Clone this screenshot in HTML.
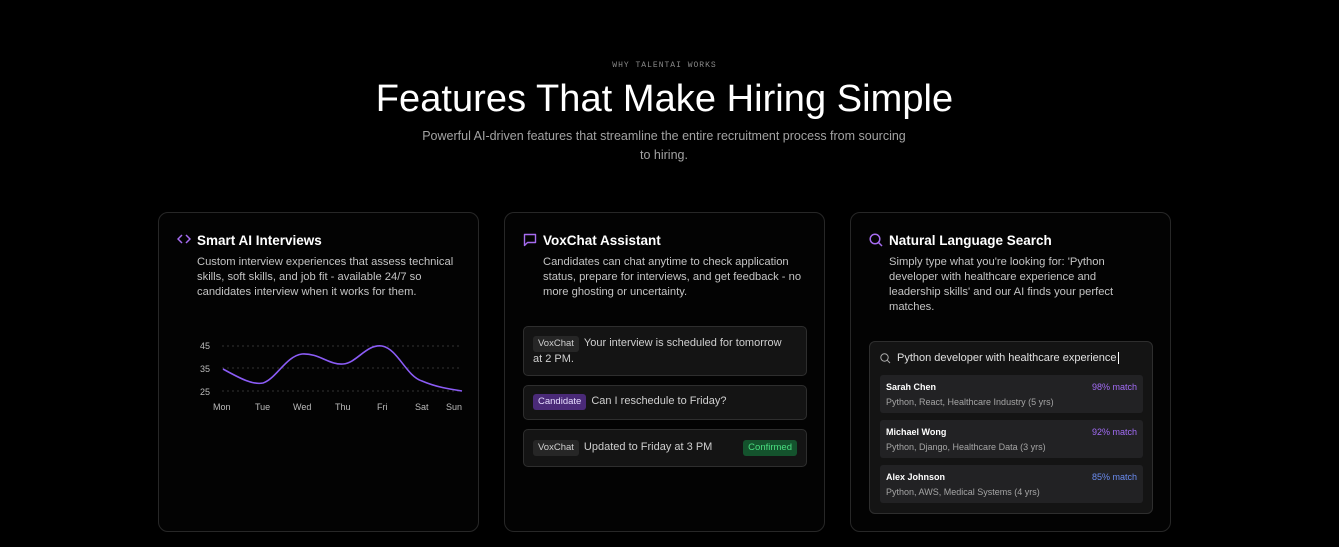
<!DOCTYPE html>
<html><head><style>
*{margin:0;padding:0;box-sizing:border-box}
body{width:1339px;height:547px;background:#000;font-family:"Liberation Sans",sans-serif;color:#fff;position:relative;overflow:hidden}
.ab{position:absolute}
.eyebrow{left:-5px;width:1339px;top:61px;text-align:center;font-family:"Liberation Mono",monospace;font-size:8px;letter-spacing:1px;color:#8a8a8a}
h1{position:absolute;left:-5px;width:1339px;top:78px;text-align:center;font-size:38px;font-weight:400;letter-spacing:0.05px}
.sub{left:364px;width:600px;top:127px;text-align:center;font-size:12.5px;line-height:19px;color:#a3a3a3}
.card{position:absolute;top:212px;width:321px;height:320px;border:1px solid #272727;border-radius:10px;background:#030303}
.title{position:absolute;left:38px;top:20px;font-size:13.5px;font-weight:bold}
.icon{position:absolute;left:18px;top:20px}
.desc{position:absolute;left:38px;top:42px;width:266px;font-size:11.2px;line-height:15px;color:#c4c4c4}
.msg{position:absolute;left:18px;width:284px;border:1px solid #2e2e2e;border-radius:5px;background:#141414;font-size:11px;color:#cfcfcf;padding:9px 9px;line-height:15px}
.tag{display:inline-block;font-size:9.5px;padding:1px 5px;border-radius:3px;background:#262626;color:#d0d0d0;margin-right:5px;line-height:14px}
.res{position:absolute;left:10px;width:263px;height:38px;background:#222224;border-radius:3px;padding:6px 6px}
.res b{font-size:9px;color:#fff;display:block;line-height:12px}
.res span{font-size:9px;color:#a5a5a5;display:block;margin-top:4px}
.res i{position:absolute;right:6px;top:7px;font-style:normal;font-size:9px;color:#a26cf5}
</style></head><body>
<div class="ab eyebrow">WHY TALENTAI WORKS</div>
<h1>Features That Make Hiring Simple</h1>
<div class="ab sub">Powerful AI-driven features that streamline the entire recruitment process from sourcing<br>to hiring.</div>

<div class="card" style="left:158px">
<svg class="icon" width="14" height="12" viewBox="0 0 14 12"><path d="M5 2L1 6l4 4M9 2l4 4-4 4" stroke="#a66cf0" stroke-width="1.5" fill="none"/></svg>
<div class="title">Smart AI Interviews</div>
<div class="desc">Custom interview experiences that assess technical skills, soft skills, and job fit - available 24/7 so candidates interview when it works for them.</div>
<svg class="ab" style="left:30px;top:120px" width="290" height="80" viewBox="188 332 290 80">
<g stroke="#333" stroke-dasharray="2 3" stroke-width="1"><line x1="221" y1="345" x2="461" y2="345"/><line x1="221" y1="367" x2="461" y2="367"/><line x1="221" y1="390" x2="461" y2="390"/></g>
<g font-family="Liberation Sans" font-size="9" fill="#bbb"><text x="199" y="348">45</text><text x="199" y="371">35</text><text x="199" y="394">25</text>
<text x="212" y="409">Mon</text><text x="254" y="409">Tue</text><text x="292" y="409">Wed</text><text x="334" y="409">Thu</text><text x="376" y="409">Fri</text><text x="414" y="409">Sat</text><text x="445" y="409">Sun</text></g>
<path d="M222 368C240 378 252 384 262 382C275 378 285 355 301 353C318 352 328 364 342 363C356 362 365 343 381 345C397 348 405 375 421 380C435 386 448 388 461 390" stroke="#8b5cf6" stroke-width="1.6" fill="none"/>
</svg>
</div>

<div class="card" style="left:504px">
<svg class="icon" width="14" height="14" viewBox="0 0 14 14"><path d="M1.5 1.5h11v8h-8l-3 3z" stroke="#a66cf0" stroke-width="1.4" fill="none" stroke-linejoin="round"/></svg>
<div class="title">VoxChat Assistant</div>
<div class="desc">Candidates can chat anytime to check application status, prepare for interviews, and get feedback - no more ghosting or uncertainty.</div>
<div class="msg" style="top:113px;height:50px;padding-right:14px"><span class="tag">VoxChat</span>Your interview is scheduled for tomorrow at 2 PM.</div>
<div class="msg" style="top:172px;height:35px;padding-top:8px"><span class="tag" style="background:#4a2a78;color:#e6dcff">Candidate</span>Can I reschedule to Friday?</div>
<div class="msg" style="top:216px;height:38px;padding-top:10px"><span class="tag">VoxChat</span>Updated to Friday at 3 PM<span class="tag" style="background:#14532d;color:#4ade80;position:absolute;right:9px;top:10px;margin:0">Confirmed</span></div>
</div>

<div class="card" style="left:850px">
<svg class="icon" width="14" height="14" viewBox="0 0 14 14"><circle cx="6" cy="6" r="4.8" stroke="#a66cf0" stroke-width="1.5" fill="none"/><path d="M9.5 9.5L13 13" stroke="#a66cf0" stroke-width="1.5"/></svg>
<div class="title">Natural Language Search</div>
<div class="desc" style="width:236px">Simply type what you're looking for: 'Python developer with healthcare experience and leadership skills' and our AI finds your perfect matches.</div>
<div class="ab" style="left:18px;top:128px;width:284px;height:173px;border:1px solid #2e2e2e;border-radius:6px;background:#141414">
<svg class="ab" style="left:10px;top:11px" width="11" height="11" viewBox="0 0 11 11"><circle cx="4.5" cy="4.5" r="3.7" stroke="#aaa" fill="none"/><path d="M7.3 7.3L10 10" stroke="#aaa"/></svg>
<div class="ab" style="left:27px;top:10px;font-size:11px;color:#e0e0e0">Python developer with healthcare experience<span style="border-left:1px solid #fff;margin-left:1px"></span></div>
<div class="res" style="top:33px"><b>Sarah Chen</b><span>Python, React, Healthcare Industry (5 yrs)</span><i>98% match</i></div>
<div class="res" style="top:78px"><b>Michael Wong</b><span>Python, Django, Healthcare Data (3 yrs)</span><i>92% match</i></div>
<div class="res" style="top:123px"><b>Alex Johnson</b><span>Python, AWS, Medical Systems (4 yrs)</span><i style="color:#6b8cf0">85% match</i></div>
</div>
</div>
</body></html>
